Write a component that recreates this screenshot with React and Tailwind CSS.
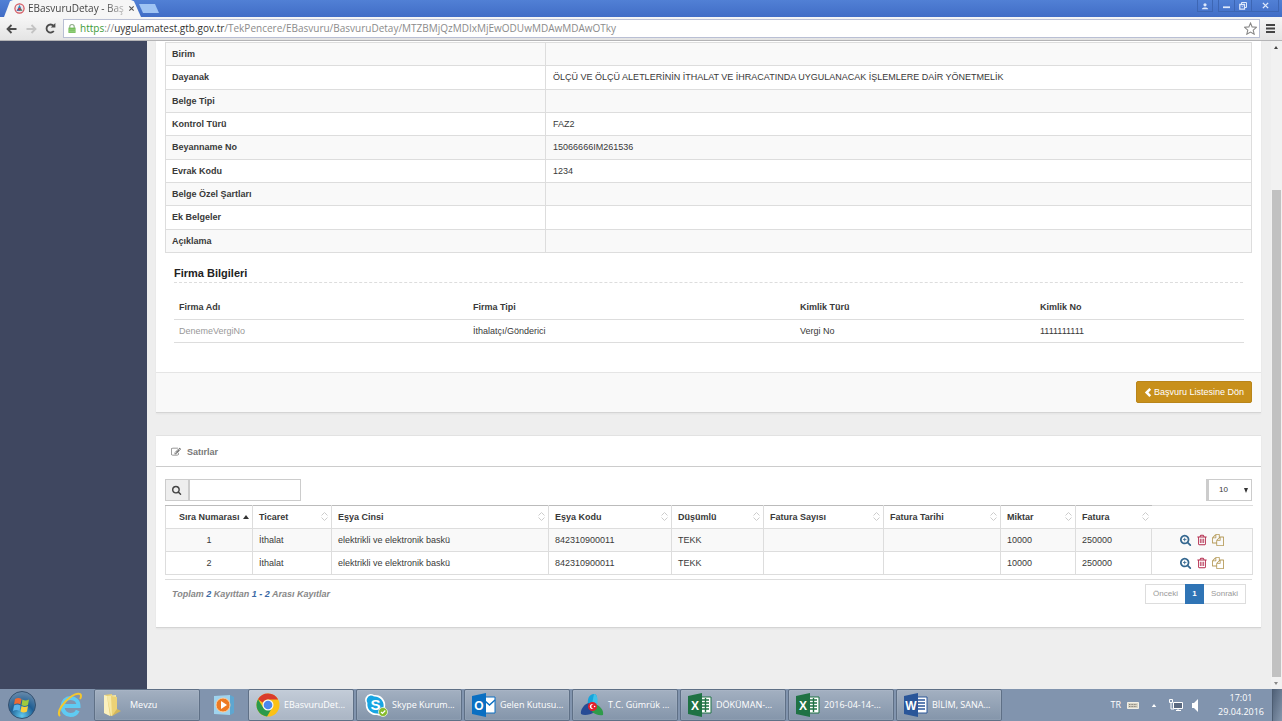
import clsx from "clsx";

const DETAILS = [
    { label: "Birim", value: "" },
    {
        label: "Dayanak",
        value: "ÖLÇÜ VE ÖLÇÜ ALETLERİNİN İTHALAT VE İHRACATINDA UYGULANACAK İŞLEMLERE DAİR YÖNETMELİK",
    },
    { label: "Belge Tipi", value: "" },
    { label: "Kontrol Türü", value: "FAZ2" },
    { label: "Beyanname No", value: "15066666IM261536" },
    { label: "Evrak Kodu", value: "1234" },
    { label: "Belge Özel Şartları", value: "" },
    { label: "Ek Belgeler", value: "" },
    { label: "Açıklama", value: "" },
];

const COLUMNS = [
    { title: "Sıra Numarası", width: "w-[87px]", sorted: true },
    { title: "Ticaret", width: "w-[79px]" },
    { title: "Eşya Cinsi", width: "w-[217px]" },
    { title: "Eşya Kodu", width: "w-[123px]" },
    { title: "Düşümlü", width: "w-[92px]" },
    { title: "Fatura Sayısı", width: "w-[120px]" },
    { title: "Fatura Tarihi", width: "w-[117px]" },
    { title: "Miktar", width: "w-[75px]" },
    { title: "Fatura", width: "w-[76px]" },
];

const ROWS = [
    ["1", "İthalat", "elektrikli ve elektronik baskü", "842310900011", "TEKK", "", "", "10000", "250000"],
    ["2", "İthalat", "elektrikli ve elektronik baskü", "842310900011", "TEKK", "", "", "10000", "250000"],
];

const PATHS = {
    search: "M1152 832q0-185-131.5-316.5t-316.5-131.5-316.5 131.5-131.5 316.5 131.5 316.5 316.5 131.5 316.5-131.5 131.5-316.5zm512 832q0 52-38 90t-90 38q-54 0-90-38l-343-342q-179 124-399 124-143 0-273.5-55.5t-225-150-150-225-55.5-273.5 55.5-273.5 150-225 225-150 273.5-55.5 273.5 55.5 225 150 150 225 55.5 273.5q0 220-124 399l343 343q37 37 37 90z",
    trash: "M704 736v576q0 14-9 23t-23 9h-64q-14 0-23-9t-9-23v-576q0-14 9-23t23-9h64q14 0 23 9t9 23zm256 0v576q0 14-9 23t-23 9h-64q-14 0-23-9t-9-23v-576q0-14 9-23t23-9h64q14 0 23 9t9 23zm256 0v576q0 14-9 23t-23 9h-64q-14 0-23-9t-9-23v-576q0-14 9-23t23-9h64q14 0 23 9t9 23zm128 724v-948h-896v948q0 22 7 40.5t14.5 27 10.5 8.5h832q3 0 10.5-8.5t14.5-27 7-40.5zm-672-1076h448l-48-117q-7-9-17-11h-317q-10 2-17 11zm928 32v64q0 14-9 23t-23 9h-96v948q0 83-47 143.5t-113 60.5h-832q-66 0-113-58.5t-47-141.5v-952h-96q-14 0-23-9t-9-23v-64q0-14 9-23t23-9h309l70-167q15-37 54-63t79-26h320q40 0 79 26t54 63l70 167h309q14 0 23 9t9 23z",
    files: "M1696 384q40 0 68 28t28 68v1216q0 40-28 68t-68 28h-960q-40 0-68-28t-28-68v-288h-544q-40 0-68-28t-28-68v-672q0-40 20-88t48-76l408-408q28-28 76-48t88-20h416q40 0 68 28t28 68v328q68-40 128-40h416zm-544 213l-299 299h299v-299zm-640-384l-299 299h299v-299zm196 647l316-316v-416h-384v416q0 40-28 68t-68 28h-416v640h512v-256q0-40 20-88t48-76zm956 804v-1152h-384v416q0 40-28 68t-68 28h-416v640h896z",
    edit: "M888 1184l116-116-152-152-116 116v56h96v96h56zm440-720q-16-16-33 1l-350 350q-17 17-1 33t33-1l350-350q17-17 1-33zm80 594v190q0 119-84.5 203.5t-203.5 84.5h-832q-119 0-203.5-84.5t-84.5-203.5v-832q0-119 84.5-203.5t203.5-84.5h832q63 0 117 25 15 7 18 23 3 17-9 29l-49 49q-14 14-32 8-23-6-45-6h-832q-66 0-113 47t-47 113v832q0 66 47 113t113 47h832q66 0 113-47t47-113v-126q0-13 9-22l64-64q15-15 35-7t20 29zm-96-738l288 288-672 672h-288v-288zm444 132l-92 92-288-288 92-92q28-28 68-28t68 28l152 152q28 28 28 68t-28 68z",
};

function Glyph({ name, className, plus }) {
    return (
        <svg viewBox="0 0 1792 1792" fill="currentColor" className={className} aria-hidden="true">
            <path d={PATHS[name]} />
            {plus && <path d="M640 576h128v192h192v128h-192v192h-128v-192h-192v-128h192z" />}
        </svg>
    );
}

function CustomsLogo({ className }) {
    return (
        <svg viewBox="0 0 24 24" className={className} aria-hidden="true">
            <path d="M8 12C7 6 9 1 14 1c4 0 3 5 3 11z" fill="#16a5dc" />
            <path d="M14 1c4 1 4 6 3 12l-5-2z" fill="#3fc1ea" />
            <path d="M9 10C4 11 0 17 1 21c3 2 9 1 14-2z" fill="#274b95" />
            <path d="M15 11c5 2 9 6 8 11-4 1-8-1-11-3z" fill="#2f9b4a" />
            <circle cx="12.500" cy="13.500" r="4.500" fill="#e3202c" />
            <path d="M13.500 11.300a2.500 2.500 0 1 0 0 4.400 2 2 0 1 1 0-4.400z" fill="#fff" />
            <circle cx="14.600" cy="13.500" r=".8" fill="#fff" />
        </svg>
    );
}

function BrowserBar() {
    return (
        <header>
            <div className="flex h-[17px] justify-between bg-linear-to-b from-[#5180d5] to-[#416dc6]">
                <div className="flex">
                    <div className="ml-1 flex w-[137px] items-center gap-[3px] bg-[#f6f6f6] pr-2 pl-[10px] text-[10px] text-[#444] [clip-path:polygon(0_100%,6px_8%,9px_0,127px_0,130px_8%,100%_100%)]">
                        <svg viewBox="0 0 12 12" className="size-[11px] shrink-0" aria-hidden="true">
                            <circle cx="6" cy="6" r="5" fill="#f1e6ea" stroke="#d2535c" strokeWidth="1.300" />
                            <path d="M6 2l2 4H4z" fill="#2c8fc6" />
                            <path d="M2.500 8.500L5 5.500l1.500 3z" fill="#274b95" />
                            <path d="M9.500 8.500L7 5.500l-1.500 3z" fill="#3a7d66" />
                            <circle cx="6" cy="6.500" r="1.300" fill="#d8323b" />
                        </svg>
                        <span className="whitespace-nowrap [mask-image:linear-gradient(to_right,#000_80%,rgba(0,0,0,0.3))]">
                            EBasvuruDetay - Baş
                        </span>
                        <button aria-label="Sekmeyi kapat" className="ml-px shrink-0">
                            <svg viewBox="0 0 8 8" className="size-[7px]">
                                <path d="M1.500 1.500l5 5m0-5l-5 5" stroke="#555" strokeWidth="1.300" />
                            </svg>
                        </button>
                    </div>
                    <button
                        aria-label="Yeni sekme"
                        className="mt-1 -ml-[2px] h-[9px] w-5 bg-[#9fc3f3] [clip-path:polygon(0_0,80%_0,100%_100%,20%_100%)]"
                    />
                </div>
                <div className="mr-[3px] flex h-3 gap-[5px] text-[#dfe9fb]">
                    <button aria-label="Profil" className="flex w-4 items-center justify-center border border-t-0 border-[#3d66b4]">
                        <svg viewBox="0 0 10 10" className="size-2" fill="currentColor">
                            <circle cx="5" cy="3.500" r="2" />
                            <path d="M1 9c0-3 8-3 8 0z" />
                        </svg>
                    </button>
                    <div className="flex border border-t-0 border-[#3d66b4]">
                        <button aria-label="Simge durumuna küçült" className="flex w-4 items-center justify-center border-r border-[#3d66b4]">
                            <svg viewBox="0 0 8 8" className="size-[7px]"><path d="M0 5h8v2H0z" fill="currentColor" /></svg>
                        </button>
                        <button aria-label="Önceki boyut" className="flex w-[17px] items-center justify-center border-r border-[#3d66b4]">
                            <svg viewBox="0 0 8 8" className="size-2" fill="none" stroke="currentColor">
                                <path d="M2.500 2V.5h5v5H6" />
                                <path d="M.8 2.500h4.700v4.700H.8zM2.700 4.600h1" strokeWidth="1.300" />
                            </svg>
                        </button>
                        <button aria-label="Kapat" className="flex w-[26px] items-center justify-center">
                            <svg viewBox="0 0 8 8" className="size-[7px]"><path d="M1 1l6 6m0-6L1 7" stroke="currentColor" strokeWidth="1.600" /></svg>
                        </button>
                    </div>
                </div>
            </div>
            <div className="flex h-6 items-center border-b border-[#b4b4b6] bg-linear-to-b from-[#f6f6f6] to-[#e4e4e4] pr-[7px] pl-[6px] text-[#4c4c4c]">
                <button aria-label="Geri" className="mr-[9px]">
                    <svg viewBox="0 0 11 10" className="h-[10px] w-[11px]" fill="none" stroke="currentColor" strokeWidth="1.800">
                        <path d="M10.500 5h-9M5.500 1l-4 4 4 4" />
                    </svg>
                </button>
                <button aria-label="İleri" className="mr-2 text-[#c4c4c4]">
                    <svg viewBox="0 0 11 10" className="h-[10px] w-[11px]" fill="none" stroke="currentColor" strokeWidth="1.800">
                        <path d="M.5 5h9M5.500 1l4 4-4 4" />
                    </svg>
                </button>
                <button aria-label="Yenile" className="mr-[7px]">
                    <svg viewBox="0 0 12 12" className="size-[11px]" fill="none" stroke="currentColor" strokeWidth="2">
                        <path d="M9.600 8.700A4.400 4.400 0 1 1 9.300 3" />
                        <path d="M11.300 0v5H6.300z" fill="currentColor" stroke="none" />
                    </svg>
                </button>
                <div className="flex h-[19px] flex-1 items-center border border-[#b9bfd4] bg-white pr-[2px] pl-1">
                    <svg viewBox="0 0 9 11" className="mr-1 h-[11px] w-2 shrink-0" aria-hidden="true">
                        <path d="M2 5V3.500a2.500 2.500 0 0 1 5 0V5" fill="none" stroke="#8fae8a" strokeWidth="1.300" />
                        <path d="M.5 4.500h8v6h-8z" fill="#76bf5b" />
                        <path d="M.5 7h8M.5 9h8" stroke="#a4d793" strokeWidth=".7" />
                    </svg>
                    <div
                        role="textbox"
                        aria-label="Adres"
                        contentEditable
                        suppressContentEditableWarning
                        spellCheck={false}
                        className="flex-1 text-[10px] whitespace-nowrap text-[#8b8b8b]"
                    >
                        <span className="text-[#3d9b36]">https</span>://
                        <span className="text-[#333]">uygulamatest.gtb.gov.tr</span>
                        /TekPencere/EBasvuru/BasvuruDetay/MTZBMjQzMDIxMjEwODUwMDAwMDAwOTky
                    </div>
                    <button aria-label="Yer işareti ekle">
                        <svg viewBox="0 0 24 24" className="size-[13px]" fill="none" stroke="#888" strokeWidth="2">
                            <path d="M12 2l3 7 8 .8-6 5.200 1.800 7.500L12 18.500 5.200 22.500 7 15 1 9.800 9 9z" />
                        </svg>
                    </button>
                </div>
                <button aria-label="Menü" className="ml-[6px]">
                    <svg viewBox="0 0 9 9" className="size-[9px]"><path d="M0 1h9M0 4.500h9M0 8h9" stroke="#444" strokeWidth="2" /></svg>
                </button>
            </div>
        </header>
    );
}

function DetailCard() {
    return (
        <section className="border-b border-[#d4d4d4] bg-white shadow-xs">
            <div className="px-[9px] pt-px pb-[29px]">
                <table className="h-[211px] w-full table-fixed border-collapse border border-[#ddd]">
                    <tbody>
                        {DETAILS.map((row) => (
                            <tr key={row.label} className="border border-[#ddd] odd:bg-[#f9f9f9]">
                                <th scope="row" className="w-[35%] border-r border-[#ddd] px-[6px] text-left font-bold">
                                    {row.label}
                                </th>
                                <td className="px-[7px]">{row.value}</td>
                            </tr>
                        ))}
                    </tbody>
                </table>
                <div className="px-[9px] pt-3">
                    <h2 className="border-b border-dashed border-[#ddd] pb-px text-[11px] leading-4 font-bold text-[#222]">
                        Firma Bilgileri
                    </h2>
                    <table className="mt-3 w-full table-fixed border-collapse">
                        <thead>
                            <tr className="h-6 border-b border-[#ddd] text-left">
                                <th className="w-[294px] px-[5px]">Firma Adı</th>
                                <th className="w-[327px] px-[5px]">Firma Tipi</th>
                                <th className="w-[240px] px-[5px]">Kimlik Türü</th>
                                <th className="w-[209px] px-[5px]">Kimlik No</th>
                            </tr>
                        </thead>
                        <tbody>
                            <tr className="h-[23px] border-b border-[#ddd]">
                                <td className="px-[5px] text-[#999]">DenemeVergiNo</td>
                                <td className="px-[5px]">İthalatçı/Gönderici</td>
                                <td className="px-[5px]">Vergi No</td>
                                <td className="px-[5px]">1111111111</td>
                            </tr>
                        </tbody>
                    </table>
                </div>
            </div>
            <div className="flex h-10 items-center justify-end border-t border-[#e5e5e5] bg-[#f9f9f9] px-[9px]">
                <button className="flex h-[22px] items-center gap-[2px] rounded-xs border border-[#b9851a] bg-[#c8901b] px-[7px] text-white">
                    <svg viewBox="0 0 8 10" className="h-[9px] w-2" fill="none" stroke="currentColor" strokeWidth="2.800">
                        <path d="M6.500 1l-4 4 4 4" />
                    </svg>
                    Başvuru Listesine Dön
                </button>
            </div>
        </section>
    );
}

function SortMark({ sorted }) {
    if (sorted) {
        return (
            <svg viewBox="0 0 6 4" className="h-1 w-[6px] shrink-0" aria-hidden="true">
                <path d="M0 4l3-4 3 4z" fill="#333" />
            </svg>
        );
    }
    return (
        <svg viewBox="0 0 7 9" className="h-[9px] w-[7px] shrink-0" fill="none" stroke="#ccc" aria-hidden="true">
            <path d="M.5 3.500l3-3 3 3M.5 5.500l3 3 3-3" />
        </svg>
    );
}

function RowActions() {
    return (
        <div className="flex items-center justify-center gap-1">
            <button aria-label="Görüntüle" className="text-[#34678f]">
                <Glyph name="search" plus className="size-3" />
            </button>
            <button aria-label="Sil" className="text-[#b3294b]">
                <Glyph name="trash" className="size-3" />
            </button>
            <button aria-label="Kopyala" className="text-[#b59a58]">
                <Glyph name="files" className="size-3" />
            </button>
        </div>
    );
}

function LinesCard() {
    return (
        <section className="mt-[22px] border border-x-0 border-t-[#e2e2e2] border-b-[#d4d4d4] bg-white shadow-xs">
            <h2 className="flex h-[31px] items-center gap-[6px] border-b border-[#ccc] pt-[2px] pl-[15px] font-bold text-[#777]">
                <Glyph name="edit" className="size-[10px]" />
                Satırlar
            </h2>
            <div className="px-[9px] pt-3 pb-[23px]">
                <div className="mb-1 flex justify-between">
                    <div className="flex h-[22px] border border-[#ccc]">
                        <label htmlFor="table-search" className="flex w-[22px] items-center justify-center bg-[#eee] text-[#444]">
                            <Glyph name="search" className="size-[10px]" />
                        </label>
                        <input
                            id="table-search"
                            type="text"
                            aria-label="Ara"
                            className="w-28 border-l-2 border-[#ccc] bg-white px-1 outline-none"
                        />
                    </div>
                    <div className="relative h-[22px] w-[46px]">
                        <select
                            aria-label="Sayfadaki kayıt sayısı"
                            className="h-full w-full appearance-none border border-l-3 border-[#ccc] bg-white pl-[10px] text-[8px]"
                        >
                            <option>10</option>
                            <option>25</option>
                            <option>50</option>
                        </select>
                        <svg viewBox="0 0 4 5" className="pointer-events-none absolute top-[9px] right-1 h-[5px] w-1">
                            <path d="M0 0h4L2 5z" fill="#333" />
                        </svg>
                    </div>
                </div>
                <div className="border-b border-[#ddd] pb-1">
                    <table className="w-full table-fixed border-collapse">
                        <thead>
                            <tr className="h-[23px]">
                                {COLUMNS.map((col) => (
                                    <th
                                        key={col.title}
                                        className={clsx(
                                            "border-t border-b border-t-[#bbb] border-b-[#ddd]",
                                            col.title !== "Fatura" && "border-r border-r-[#ddd]",
                                            col.sorted && "border-l border-l-[#ddd]",
                                            col.width,
                                        )}
                                    >
                                        <button
                                            className={clsx(
                                                "flex w-full items-center justify-between font-bold",
                                                col.sorted ? "pr-[3px] pl-[13px]" : "pr-[3px] pl-[6px]",
                                            )}
                                        >
                                            {col.title}
                                            <SortMark sorted={col.sorted} />
                                        </button>
                                    </th>
                                ))}
                                <th aria-label="İşlemler" className="w-[101px] border-t border-b border-[#ddd]" />
                            </tr>
                        </thead>
                        <tbody>
                            {ROWS.map((row) => (
                                <tr key={row[0]} className="h-[23px] odd:bg-[#f9f9f9]">
                                    {row.map((cell, i) => (
                                        <td
                                            key={i}
                                            className={clsx("border border-[#ddd] px-[6px]", i === 0 && "text-center")}
                                        >
                                            {cell}
                                        </td>
                                    ))}
                                    <td className="border border-[#ddd]">
                                        <RowActions />
                                    </td>
                                </tr>
                            ))}
                        </tbody>
                    </table>
                </div>
                <div className="flex items-center justify-between pt-1 pr-[6px] pl-[7px]">
                    <p className="font-bold text-[#888] italic">
                        Toplam <b className="text-[#3a69a5]">2</b> Kayıttan <b className="text-[#3a69a5]">1 - 2</b> Arası Kayıtlar
                    </p>
                    <nav aria-label="Sayfalama" className="flex h-5 text-[8px] text-[#999]">
                        <button className="w-10 border border-r-0 border-[#ddd]">Önceki</button>
                        <button aria-current="page" className="w-[19px] bg-[#2f74b5] font-bold text-white">1</button>
                        <button className="w-[42px] border border-l-0 border-[#ddd]">Sonraki</button>
                    </nav>
                </div>
            </div>
        </section>
    );
}

function PageScrollbar() {
    return (
        <div className="flex w-[11px] shrink-0 flex-col items-center bg-[#f1f1f1] pr-px" aria-hidden="true">
            <div className="flex h-3 items-center">
                <svg viewBox="0 0 4 3" className="h-[3px] w-1"><path d="M0 3l2-3 2 3z" fill="#444" /></svg>
            </div>
            <div className="flex w-full flex-1 flex-col">
                <div className="grow-[137]" />
                <div className="ml-px grow-[488] bg-[#c1c1c1]" />
            </div>
            <div className="flex h-3 items-center">
                <svg viewBox="0 0 4 3" className="h-[3px] w-1"><path d="M0 0h4L2 3z" fill="#888" /></svg>
            </div>
        </div>
    );
}

function FolderIcon() {
    return (
        <svg viewBox="0 0 20 24" className="h-6 w-5">
            <path d="M2 2l8-1 2 20-3 2-7-3z" fill="#e9cf72" />
            <path d="M5 3l9-1v18l-5 3z" fill="#f7e9a5" />
            <path d="M9 3l6 1v15l-5 4z" fill="#ecd276" />
            <path d="M15 16l4 2-9 5z" fill="#d3b75c" />
            <path d="M2 2l3 1 3 20-6-3z" fill="#fbf1bf" />
        </svg>
    );
}

function ChromeIcon() {
    return (
        <svg viewBox="0 0 24 24" className="size-6">
            <circle cx="12" cy="12" r="11.500" fill="#fbc116" />
            <path d="M2 6.300A11.500 11.500 0 0 1 22.200 6.500H12a5.500 5.500 0 0 0-5 3.200z" fill="#d93a2c" />
            <path d="M2 6.300A11.500 11.500 0 0 0 11 23.500l5-8.500a5.500 5.500 0 0 1-8.900-.5z" fill="#2b9a4b" />
            <circle cx="12" cy="12" r="5.500" fill="#f4f6f4" />
            <circle cx="12" cy="12" r="4.300" fill="#4a87ed" />
        </svg>
    );
}

function SkypeIcon() {
    return (
        <svg viewBox="0 0 24 24" className="size-6">
            <path d="M6 1a6 6 0 0 1 4 1 10 10 0 0 1 11 12 6 6 0 0 1-8 8A10 10 0 0 1 2 10 6 6 0 0 1 6 1z" fill="#fff" />
            <path d="M6.500 2.500a5 5 0 0 1 3.500 1 9 9 0 0 1 9.500 10.500 5 5 0 0 1-6.500 6.500A9 9 0 0 1 3.500 10 5 5 0 0 1 6.500 2.500z" fill="#18a5e2" />
            <text x="11.500" y="17" textAnchor="middle" fontSize="15" fontWeight="700" fill="#fff" fontFamily="Liberation Sans, sans-serif">S</text>
            <circle cx="19" cy="19" r="4.500" fill="#86bb2c" stroke="#fff" strokeWidth=".7" />
            <path d="M17 19l1.500 1.500 2.800-3" fill="none" stroke="#fff" strokeWidth="1.200" />
        </svg>
    );
}

function OfficeIcon({ letter, color, kind }) {
    return (
        <svg viewBox="0 0 24 24" className="size-6">
            <path d="M12 4h11v16H12z" fill="#fff" stroke={color} />
            {kind === "mail" && <path d="M13 8l4.500 4L23 7" fill="none" stroke={color} strokeWidth="1.500" />}
            {kind === "grid" && <path d="M14 7h7M14 10h7M14 13h7M14 16h7M17.500 5v14" stroke={color} strokeWidth="1.400" />}
            {kind === "lines" && <path d="M14 7h7M14 10h7M14 13h7M14 16h7" stroke={color} strokeWidth="1.400" />}
            <path d="M0 3l14-3v24L0 21z" fill={color} />
            <text x="7" y="16.500" textAnchor="middle" fontSize="12" fontWeight="700" fill="#fff" fontFamily="Liberation Sans, sans-serif">
                {letter}
            </text>
        </svg>
    );
}

function TaskButton({ icon, label, active }) {
    return (
        <button
            className={clsx(
                "flex h-full w-[106px] items-center gap-1 overflow-hidden rounded-xs border border-[#5f7086] px-[7px] text-[9px] whitespace-nowrap text-white inset-shadow-[0_0_1px_#d5dde8]",
                active
                    ? "bg-linear-to-b from-[#c3ccd8] to-[#aab5c4]"
                    : "bg-linear-to-b from-[#a3b0c1] to-[#8495aa]",
            )}
        >
            <span className="shrink-0">{icon}</span>
            {label}
        </button>
    );
}

function Taskbar() {
    return (
        <footer className="flex h-8 items-stretch bg-[#8194ae] text-white">
            <button aria-label="Başlat" className="ml-[7px] w-[30px]">
                <svg viewBox="0 0 30 30" className="size-[30px]">
                    <defs>
                        <radialGradient id="orb" cx=".5" cy=".9" r=".9">
                            <stop offset="0" stopColor="#5fc9ee" />
                            <stop offset=".5" stopColor="#1f5e94" />
                            <stop offset="1" stopColor="#6b8cab" />
                        </radialGradient>
                    </defs>
                    <circle cx="15" cy="15" r="13.500" fill="url(#orb)" stroke="#34506f" />
                    <path d="M8 9q3.500-2 6.500 0l-1 5.500q-3-2-6.500 0z" fill="#ee6a34" />
                    <path d="M15.500 9.500q3 2 6.500 0l-1 5.500q-3.500 2-6.500 0z" fill="#9fca3e" />
                    <path d="M7 15.500q3.500-2 6.500 0l-1 5.500q-3-2-6.500 0z" fill="#5db3ea" />
                    <path d="M14.500 16q3 2 6.500 0l-1 5.500q-3.500 2-6.500 0z" fill="#fbcf3b" />
                </svg>
            </button>
            <button aria-label="Internet Explorer" className="mr-[11px] ml-5">
                <svg viewBox="0 0 26 26" className="size-[26px]" fill="none">
                    <path d="M6 14h15.500c0-5-3.500-8-8-8s-8 3.500-8 8.500 3.500 8.500 8 8.500c3.500 0 6-1.500 7.200-4.500" stroke="#5fcbf3" strokeWidth="4" />
                    <path d="M3 24C-1 20 7 9 15 4c4-2.500 9-3.500 9 0 0 1-.3 2-1 3" stroke="#f4c72e" strokeWidth="2" />
                </svg>
            </button>
            <TaskButton icon={<FolderIcon />} label={<span className="pl-1">Mevzu</span>} />
            <button aria-label="Media Player" className="mx-3">
                <svg viewBox="0 0 24 24" className="size-6">
                    <path d="M2 3l16-1v20L2 21z" fill="#9fd3ee" />
                    <path d="M18 2l4 2v16l-4 2z" fill="#5ea6d0" />
                    <circle cx="11" cy="12" r="7" fill="#ee7a22" stroke="#fbd0a4" />
                    <path d="M9 8l6 4-6 4z" fill="#fff" />
                </svg>
            </button>
            <div className="flex flex-1 gap-[2px]">
                <TaskButton active icon={<ChromeIcon />} label="EBasvuruDet..." />
                <TaskButton icon={<SkypeIcon />} label="Skype Kurum..." />
                <TaskButton icon={<OfficeIcon letter="O" color="#0a6fc2" kind="mail" />} label="Gelen Kutusu..." />
                <TaskButton icon={<CustomsLogo className="size-6" />} label="T.C. Gümrük ..." />
                <TaskButton icon={<OfficeIcon letter="X" color="#1f7244" kind="grid" />} label="DÖKÜMAN-..." />
                <TaskButton icon={<OfficeIcon letter="X" color="#1f7244" kind="grid" />} label="2016-04-14-..." />
                <TaskButton icon={<OfficeIcon letter="W" color="#2a5699" kind="lines" />} label="BİLİM, SANA..." />
            </div>
            <div className="flex items-center text-[9px]">
                <span className="mr-[6px]">TR</span>
                <svg viewBox="0 0 12 7" className="mr-3 h-[7px] w-3" aria-hidden="true">
                    <path d="M.5.5h11v6H.5z" fill="#d8d4c6" stroke="#f3f0e6" />
                    <path d="M2 2.500h8M2 4.500h8" stroke="#85817a" strokeDasharray="1 .6" />
                </svg>
                <svg viewBox="0 0 6 4" className="mr-3 h-[3px] w-[6px]" aria-hidden="true"><path d="M0 4l3-4 3 4z" fill="#fff" /></svg>
                <svg viewBox="0 0 14 13" className="mr-[9px] h-[13px] w-[14px]" fill="none" stroke="#fff" aria-hidden="true">
                    <path d="M4.500 3.500h9v6h-9z" fill="#5a6980" />
                    <path d="M.5.500h3v3h-3zM2 4v6h3M7 11.500h5M9 10v2" />
                </svg>
                <svg viewBox="0 0 10 13" className="mr-4 h-[13px] w-[10px]" aria-hidden="true">
                    <path d="M0 4h2l4-4v13L2 9H0z" fill="#fff" />
                </svg>
                <div className="mr-2 flex flex-col items-center leading-[14px]">
                    <span>17:01</span>
                    <span>29.04.2016</span>
                </div>
            </div>
            <button
                aria-label="Masaüstünü göster"
                className="w-[10px] border-l border-[#4d5d72] bg-linear-to-br from-[#4f6077] to-[#8798ae]"
            />
        </footer>
    );
}

export default function App() {
    return (
        <div className="flex min-h-screen flex-col font-['Open_Sans',sans-serif]">
            <BrowserBar />
            <div className="flex flex-1 bg-[#eee] font-['Liberation_Sans',Arial,sans-serif] text-[9px] leading-[14px] text-[#393939]">
                <aside className="w-[147px] shrink-0 bg-[#3f4760]" />
                <main className="min-w-0 flex-1 pr-[10px] pl-[9px]">
                    <DetailCard />
                    <LinesCard />
                </main>
                <PageScrollbar />
            </div>
            <Taskbar />
        </div>
    );
}
